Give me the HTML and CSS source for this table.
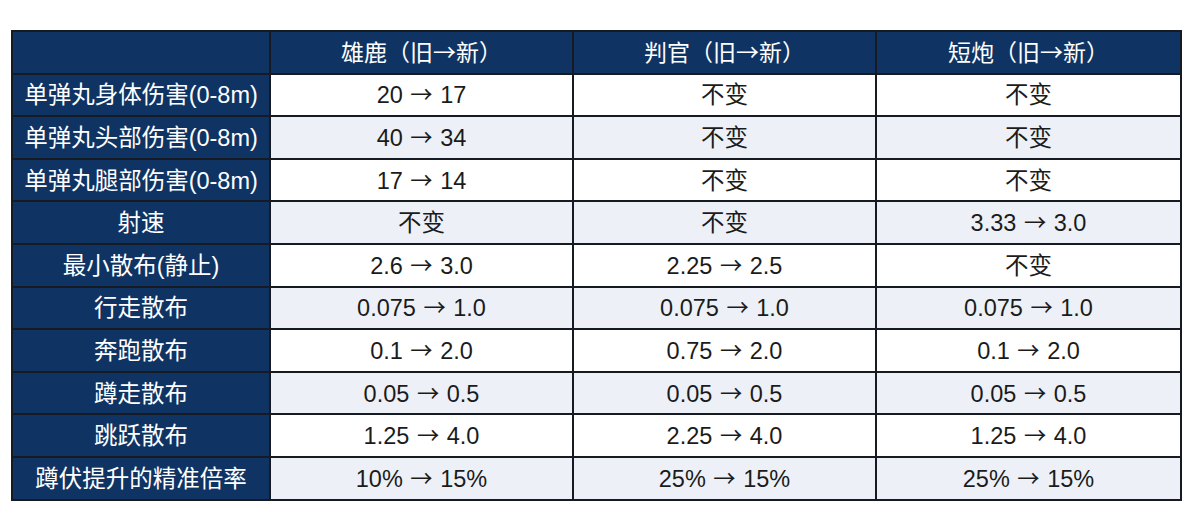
FILE: index.html
```html
<!DOCTYPE html>
<html lang="zh-CN">
<head>
<meta charset="utf-8">
<title>霰弹枪改动</title>
<link rel="stylesheet" href="styles.css">
</head>
<body>
<div class="wrap">
<table class="changes">
  <colgroup>
    <col class="c-label"><col class="c-val"><col class="c-val"><col class="c-last">
  </colgroup>
  <thead>
    <tr><th></th><th>雄鹿（旧→新）</th><th>判官（旧→新）</th><th>短炮（旧→新）</th></tr>
  </thead>
  <tbody>
    <tr><th>单弹丸身体伤害(0-8m)</th><td>20 <span class="arr">→</span> 17</td><td>不变</td><td>不变</td></tr>
    <tr class="alt"><th>单弹丸头部伤害(0-8m)</th><td>40 <span class="arr">→</span> 34</td><td>不变</td><td>不变</td></tr>
    <tr><th>单弹丸腿部伤害(0-8m)</th><td>17 <span class="arr">→</span> 14</td><td>不变</td><td>不变</td></tr>
    <tr class="alt"><th>射速</th><td>不变</td><td>不变</td><td>3.33 <span class="arr">→</span> 3.0</td></tr>
    <tr><th>最小散布(静止)</th><td>2.6 <span class="arr">→</span> 3.0</td><td>2.25 <span class="arr">→</span> 2.5</td><td>不变</td></tr>
    <tr class="alt"><th>行走散布</th><td>0.075 <span class="arr">→</span> 1.0</td><td>0.075 <span class="arr">→</span> 1.0</td><td>0.075 <span class="arr">→</span> 1.0</td></tr>
    <tr><th>奔跑散布</th><td>0.1 <span class="arr">→</span> 2.0</td><td>0.75 <span class="arr">→</span> 2.0</td><td>0.1 <span class="arr">→</span> 2.0</td></tr>
    <tr class="alt"><th>蹲走散布</th><td>0.05 <span class="arr">→</span> 0.5</td><td>0.05 <span class="arr">→</span> 0.5</td><td>0.05 <span class="arr">→</span> 0.5</td></tr>
    <tr><th>跳跃散布</th><td>1.25 <span class="arr">→</span> 4.0</td><td>2.25 <span class="arr">→</span> 4.0</td><td>1.25 <span class="arr">→</span> 4.0</td></tr>
    <tr class="alt"><th>蹲伏提升的精准倍率</th><td>10% <span class="arr">→</span> 15%</td><td>25% <span class="arr">→</span> 15%</td><td>25% <span class="arr">→</span> 15%</td></tr>
  </tbody>
</table>
</div>
</body>
</html>
```

FILE: styles.css
```css
html, body {
  margin: 0;
  padding: 0;
  background: #ffffff;
}

.wrap {
  padding: 30px 10px 0 11px;
}

.changes {
  border-collapse: collapse;
  table-layout: fixed;
  width: 1171px;
  font-family: "Liberation Sans", "Noto Sans CJK SC", sans-serif;
  font-size: 23.5px;
  color: #1b1b1b;
}

.c-label { width: 258px; }
.c-val { width: 303px; }
.c-last { width: 305px; }

.changes th,
.changes td {
  border: 2px solid #161a22;
  height: 37.6px;
  padding: 0 2px 3px;
  text-align: center;
  vertical-align: middle;
  font-weight: normal;
  white-space: nowrap;
}

.changes thead th {
  background: #0f3464;
  color: #ffffff;
  font-family: "Noto Sans CJK SC", sans-serif;
  font-size: 23px;
}

.changes tbody th {
  background: #0f3464;
  color: #ffffff;
  font-family: "Liberation Sans", "Noto Sans CJK SC", sans-serif;
  font-size: 23.5px;
}

.changes td {
  background: #ffffff;
}

.changes tr.alt td {
  background: #edf1f7;
}

.arr {
  font-family: "Noto Sans CJK SC", sans-serif;
  font-size: 0.95em;
  margin: 0 1px;
}
```
